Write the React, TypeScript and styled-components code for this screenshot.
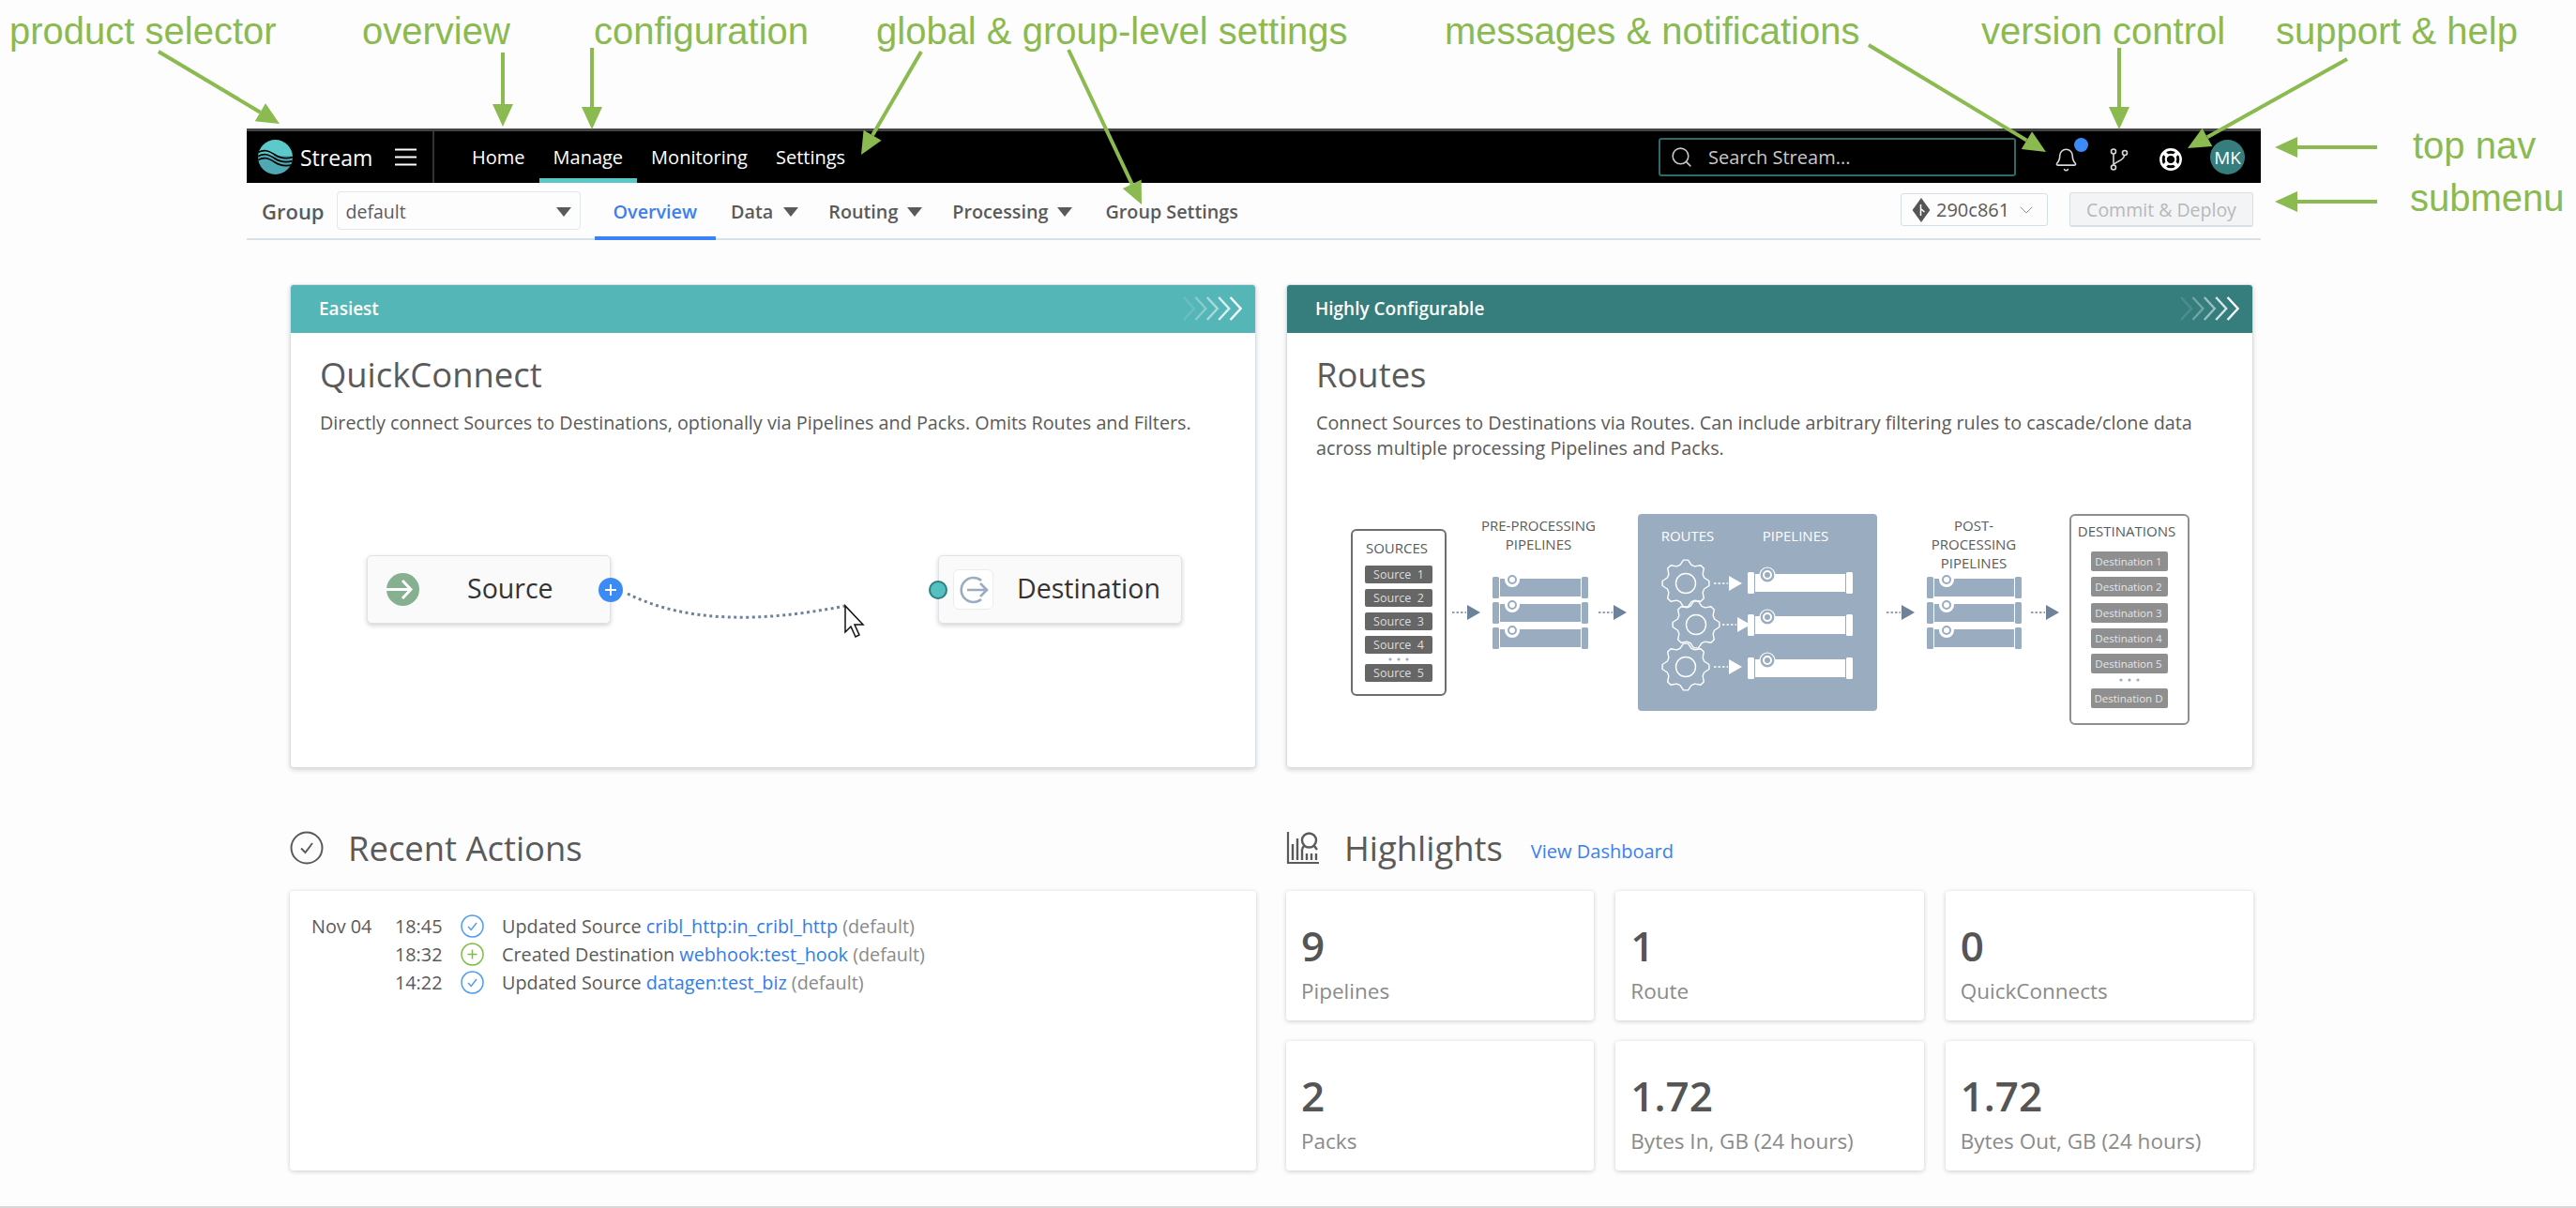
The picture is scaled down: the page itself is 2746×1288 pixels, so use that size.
import React from "react";
import styled, { createGlobalStyle } from "styled-components";
import { Bell, ChevronDown, Search } from "lucide-react";

const GlobalStyle = createGlobalStyle`
  html, body {
    margin: 0;
    padding: 0;
    background: #fdfdfd;
    overflow: hidden;
  }
  body {
    font-family: "Open Sans", "Liberation Sans", sans-serif;
    color: #5a5a5a;
  }
  * {
    box-sizing: border-box;
  }
`;

const GREEN = "#8aba50";
const TEXT = "#5a5a5a";
const SLATE = "#9aacbf";
const SLATE_DARK = "#6d829b";

/* ---------- page frame ---------- */

const Page = styled.div`
  position: relative;
  width: 2746px;
  height: 1288px;
  padding: 137px 336px 0 263px;
`;

/* ---------- callouts over the screenshot ---------- */

const CalloutLayer = styled.svg`
  position: absolute;
  left: 0;
  top: 0;
  width: 2746px;
  height: 1288px;
  pointer-events: none;
  z-index: 2;
`;

const Callout = styled.span<{ $x: number; $y: number }>`
  position: absolute;
  left: ${(p) => p.$x}px;
  top: ${(p) => p.$y}px;
  font-family: "Liberation Sans", Arial, sans-serif;
  font-size: 40px;
  line-height: 46px;
  color: ${GREEN};
  white-space: nowrap;
  z-index: 2;
`;

const callouts = [
  { text: "product selector", x: 10, y: 10 },
  { text: "overview", x: 386, y: 10 },
  { text: "configuration", x: 633, y: 10 },
  { text: "global & group-level settings", x: 934, y: 10 },
  { text: "messages & notifications", x: 1540, y: 10 },
  { text: "version control", x: 2112, y: 10 },
  { text: "support & help", x: 2426, y: 10 },
  { text: "top nav", x: 2572, y: 132 },
  { text: "submenu", x: 2569, y: 188 },
];

const calloutArrows = [
  [169, 55, 298, 132],
  [536, 56, 536, 135],
  [631, 51, 631, 138],
  [982, 55, 918, 165],
  [1139, 53, 1217, 218],
  [1992, 48, 2181, 162],
  [2259, 51, 2259, 138],
  [2502, 63, 2332, 158],
  [2534, 157, 2425, 157],
  [2534, 215, 2425, 215],
];

const CalloutArrow = ({ line }: { line: number[] }) => {
  const [x1, y1, x2, y2] = line;
  const len = Math.hypot(x2 - x1, y2 - y1);
  const ux = (x2 - x1) / len;
  const uy = (y2 - y1) / len;
  const bx = x2 - ux * 24;
  const by = y2 - uy * 24;
  const head = `${x2},${y2} ${bx - uy * 11},${by + ux * 11} ${bx + uy * 11},${by - ux * 11}`;
  return (
    <g>
      <line x1={x1} y1={y1} x2={bx} y2={by} stroke={GREEN} strokeWidth={4} />
      <polygon points={head} fill={GREEN} />
    </g>
  );
};

/* ---------- top nav ---------- */

const TopNav = styled.header`
  display: flex;
  align-items: stretch;
  height: 58px;
  background: #000;
  border-top: 3px solid #444;
  padding-right: 17px;
`;

const Brand = styled.div`
  display: flex;
  align-items: center;
  width: 200px;
  padding-left: 12px;
  border-right: 2px solid #333;
  color: #fff;
  font-size: 23px;
`;

const BrandName = styled.span`
  margin-left: 8px;
  margin-right: 24px;
`;

const NavLinks = styled.nav`
  display: flex;
  margin-left: 25px;
`;

const NavLink = styled.a<{ $active?: boolean }>`
  display: flex;
  align-items: center;
  padding: 5px 15px 0;
  font-size: 20px;
  color: #fff;
  border-bottom: 5px solid ${(p) => (p.$active ? "#5ac8c8" : "transparent")};
`;

const SearchBox = styled.div`
  display: flex;
  align-items: center;
  align-self: center;
  gap: 16px;
  width: 381px;
  height: 41px;
  margin-left: auto;
  padding-left: 10px;
  border: 2px solid #2a6b6b;
  border-radius: 3px;
  color: #c8c8c8;
  font-size: 20px;
`;

const NavIcons = styled.div`
  display: flex;
  align-items: center;
  margin-left: 40px;
`;

const IconSlot = styled.div<{ $gap: number }>`
  position: relative;
  display: flex;
  margin-right: ${(p) => p.$gap}px;
  margin-top: 5px;
`;

const NotifyDot = styled.span`
  position: absolute;
  right: -10px;
  top: -10px;
  width: 15px;
  height: 15px;
  border-radius: 50%;
  background: #3b8bf6;
`;

const Avatar = styled.div`
  display: flex;
  align-items: center;
  justify-content: center;
  width: 37px;
  height: 37px;
  border-radius: 50%;
  background: #367e7e;
  color: #fff;
  font-size: 19px;
`;

/* ---------- submenu ---------- */

const SubMenu = styled.div`
  display: flex;
  align-items: stretch;
  height: 61px;
  padding: 0 8px 0 16px;
  border-bottom: 2px solid #d8e0e8;
`;

const GroupLabel = styled.span`
  align-self: center;
  font-size: 22px;
  font-weight: 600;
  color: ${TEXT};
`;

const GroupSelect = styled.div`
  display: flex;
  align-items: center;
  justify-content: space-between;
  align-self: center;
  width: 260px;
  height: 41px;
  margin: 0 15px 0 13px;
  padding: 2px 9px 0;
  border: 1px solid #e2e7ec;
  border-radius: 4px;
  font-size: 19.5px;
  color: ${TEXT};
`;

const Caret = styled.span<{ $left?: number }>`
  display: inline-block;
  width: 0;
  height: 0;
  margin-left: ${(p) => p.$left ?? 0}px;
  border-left: 8px solid transparent;
  border-right: 8px solid transparent;
  border-top: 10px solid ${TEXT};
`;

const Tab = styled.a<{ $active?: boolean; $pad?: number; $lead?: number }>`
  display: flex;
  align-items: center;
  padding: 4px ${(p) => p.$pad ?? 16}px 0;
  margin-left: ${(p) => p.$lead ?? 0}px;
  margin-bottom: -2px;
  font-size: 19.75px;
  font-weight: 600;
  color: ${(p) => (p.$active ? "#3b7ff0" : TEXT)};
  border-bottom: 4px solid ${(p) => (p.$active ? "#3b82f6" : "transparent")};
`;

const VersionButton = styled.div`
  display: flex;
  align-items: center;
  align-self: center;
  gap: 6px;
  width: 157px;
  height: 35px;
  margin-left: auto;
  margin-top: -2px;
  padding-left: 11px;
  border: 1px solid #d5dee6;
  border-radius: 3px;
  font-size: 20px;
  color: ${TEXT};
`;

const DeployButton = styled.div`
  display: flex;
  align-items: center;
  justify-content: center;
  align-self: center;
  width: 196px;
  height: 37px;
  margin-left: 23px;
  margin-top: -2px;
  background: #f3f4f5;
  border: 1px solid #d8dfe5;
  border-bottom-width: 2px;
  border-radius: 3px;
  font-size: 19.5px;
  font-weight: 500;
  color: #b8b8b8;
`;

/* ---------- content ---------- */

const Content = styled.main`
  padding: 47px 8px 0 46px;
`;

const TwoColumns = styled.div`
  display: grid;
  grid-template-columns: 1030px 1031px;
  column-gap: 32px;
`;

const Card = styled.section`
  height: 516px;
  border: 1px solid #d5dee6;
  border-radius: 4px;
  background: #fff;
  box-shadow: 0 2px 5px rgba(0, 0, 0, 0.16);
  overflow: hidden;
`;

const CardBanner = styled.div<{ $bg: string }>`
  display: flex;
  align-items: center;
  justify-content: space-between;
  height: 52px;
  padding: 0 13px 0 31px;
  margin: -1px -1px 0;
  background: ${(p) => p.$bg};
  color: #fff;
  font-size: 19px;
  font-weight: 600;
`;

const CardBody = styled.div`
  padding: 19px 30px 0 31px;
`;

const CardTitle = styled.h2`
  margin: 0;
  font-size: 36.4px;
  font-weight: 400;
  line-height: 50px;
  color: ${TEXT};
`;

const CardText = styled.p`
  margin: 13px 0 0;
  font-size: 19.75px;
  line-height: 27px;
  color: ${TEXT};
`;

const ConnectCanvas = styled.div`
  position: relative;
  display: flex;
  gap: 349px;
  margin: 128px 0 0 50px;
`;

const FlowNode = styled.div`
  display: flex;
  align-items: center;
  width: 260px;
  height: 73px;
  background: #fafafa;
  border: 1px solid #dfe3e7;
  border-radius: 5px;
  box-shadow: 0 2px 5px rgba(0, 0, 0, 0.18);
  font-size: 28.5px;
  color: #333;
`;

const SourceGlyph = styled.span`
  display: flex;
  margin-left: 20px;
`;

const SourceLabel = styled.span`
  margin-left: 51px;
  margin-top: -3px;
`;

const DestinationLabel = styled.span`
  margin-left: 25px;
  margin-top: -3px;
`;

const DestinationIcon = styled.div`
  display: flex;
  align-items: center;
  justify-content: center;
  width: 43px;
  height: 43px;
  margin-left: 15px;
  background: #fff;
  border: 1px solid #ececec;
  border-radius: 6px;
`;

const PlusBadge = styled.span`
  position: absolute;
  left: 247px;
  top: 24px;
  display: flex;
  align-items: center;
  justify-content: center;
  width: 26px;
  height: 26px;
  border-radius: 50%;
  background: #3b8bf6;
`;

const PortDot = styled.span`
  position: absolute;
  left: 599px;
  top: 27px;
  width: 20px;
  height: 20px;
  border-radius: 50%;
  background: #55c0c0;
  border: 2px solid #2a7f7f;
`;

const WireLayer = styled.svg`
  position: absolute;
  left: 0;
  top: 0;
  width: 870px;
  height: 120px;
  overflow: visible;
`;

const RoutesDiagram = styled.svg`
  display: block;
  width: 920px;
  height: 240px;
  margin: 49px 0 0 28px;
  font-family: "Open Sans", "Liberation Sans", sans-serif;
`;

/* ---------- lower sections ---------- */

const SectionHead = styled.div`
  display: flex;
  align-items: center;
  height: 44px;
  margin: 63px 0 24px;
`;

const SectionTitle = styled.h3`
  margin: 0 0 0 26px;
  font-size: 36.4px;
  font-weight: 400;
  color: ${TEXT};
`;

const DashLink = styled.a`
  margin: 6px 0 0 30px;
  font-size: 20px;
  font-weight: 500;
  color: #3b7ff0;
`;

const Panel = styled.div`
  height: 298px;
  padding: 22px 23px;
  background: #fff;
  border-radius: 4px;
  box-shadow: 0 1px 5px rgba(0, 0, 0, 0.2);
`;

const ActionRow = styled.div`
  display: grid;
  grid-template-columns: 89px 70px 44px 1fr;
  align-items: center;
  height: 30px;
  font-size: 19.8px;
  color: ${TEXT};
`;

const ActionLink = styled.a`
  color: #2f7ee8;
`;

const ActionScope = styled.span`
  color: #8a8a8a;
`;

const HighlightGrid = styled.div`
  display: grid;
  grid-template-columns: repeat(3, 1fr);
  grid-auto-rows: 138px;
  gap: 22px 23px;
`;

const Tile = styled.div`
  padding: 29px 16px 0;
  background: #fff;
  border-radius: 4px;
  box-shadow: 0 1px 5px rgba(0, 0, 0, 0.2);
`;

const TileValue = styled.div`
  font-size: 44px;
  font-weight: 600;
  line-height: 58px;
  color: #555;
`;

const TileLabel = styled.div`
  margin-top: 6px;
  font-size: 22.5px;
  line-height: 28px;
  color: #8a8a8a;
`;

const BottomRule = styled.div`
  position: absolute;
  left: 0;
  right: 0;
  top: 1286px;
  height: 2px;
  background: #d8d8d8;
`;

/* ---------- icons ---------- */

const StreamLogo = () => (
  <svg width="37" height="37" viewBox="0 0 37 37">
    <defs>
      <clipPath id="logoClip">
        <circle cx="18.5" cy="18.5" r="18.5" />
      </clipPath>
    </defs>
    <g clipPath="url(#logoClip)">
      <rect width="37" height="18" fill="#5ccaca" />
      <rect y="17" width="37" height="20" fill="#4fa9b4" />
      <path d="M-2 15C6 9 12 12 18 16s12 5 21 2" fill="none" stroke="#000" strokeWidth="1.6" />
      <path d="M-2 19C6 13 12 16 18 20s12 5 21 2" fill="none" stroke="#000" strokeWidth="1.6" />
      <path d="M-2 23C6 17 12 20 18 24s12 5 21 2" fill="none" stroke="#000" strokeWidth="1.6" />
    </g>
  </svg>
);

const MenuIcon = () => (
  <svg width="23" height="19" viewBox="0 0 23 19" fill="none" stroke="#fff" strokeWidth="2">
    <line x1="0" y1="1.5" x2="23" y2="1.5" />
    <line x1="0" y1="9.5" x2="23" y2="9.5" />
    <line x1="0" y1="17.5" x2="23" y2="17.5" />
  </svg>
);

const BranchIcon = () => (
  <svg width="20" height="24" viewBox="0 0 20 24" fill="none" stroke="#d8d8d8" strokeWidth="1.6">
    <circle cx="4" cy="3.5" r="2.5" />
    <circle cx="16" cy="5" r="2.5" />
    <circle cx="4" cy="20.5" r="2.5" />
    <path d="M4 6v12M5 17c1-3 10-3 10.5-9.5" />
  </svg>
);

const HelpIcon = () => (
  <svg width="24" height="24" viewBox="0 0 24 24" fill="none" stroke="#fff">
    <circle cx="12" cy="12" r="10.6" strokeWidth="2.6" />
    <circle cx="12" cy="12" r="5.2" strokeWidth="2.2" />
    <path d="M5 5l4 4M19 5l-4 4M5 19l4-4M19 19l-4-4" strokeWidth="4" />
  </svg>
);

const CommitIcon = () => (
  <svg width="20" height="28" viewBox="0 0 20 28">
    <path d="M10 1l9.4 13L10 27 .6 14z" fill="#555" />
    <path d="M9.5 8v12M10 13l3.5 3" stroke="#fff" strokeWidth="1.5" fill="none" />
  </svg>
);

const BannerChevrons = () => (
  <svg width="66" height="26" viewBox="0 0 66 26" fill="none" stroke="#fff" strokeWidth="2.4">
    {[0.12, 0.3, 0.5, 0.8, 1].map((o, i) => (
      <polyline key={i} points={`${2 + i * 12.4},1 ${13 + i * 12.4},13 ${2 + i * 12.4},25`} opacity={o} />
    ))}
  </svg>
);

const SourceIcon = () => (
  <svg width="35" height="35" viewBox="0 0 35 35" fill="none" stroke="#fff" strokeWidth="3">
    <circle cx="17.5" cy="17.5" r="17.5" fill="#86b08f" stroke="none" />
    <path d="M0 17.5h25M17 8l9 9.5-9 9.5" />
  </svg>
);

const ExitIcon = () => (
  <svg width="32" height="32" viewBox="0 0 32 32" fill="none" stroke={SLATE} strokeWidth="2.6">
    <path d="M24 6A13 13 0 1 0 24 26" />
    <path d="M9 16h21M23 9l7 7-7 7" />
  </svg>
);

const ActionIcon = ({ kind }: { kind: "check" | "plus" }) => {
  const color = kind === "check" ? "#4f9df0" : "#7fbf3f";
  return (
    <svg width="25" height="25" viewBox="0 0 25 25" fill="none" stroke={color} strokeWidth="1.5">
      <circle cx="12.5" cy="12.5" r="11.5" />
      {kind === "check" ? <path d="M8 13l3.2 3.4L17 9" /> : <path d="M12.5 7.5v10M7.5 12.5h10" />}
    </svg>
  );
};

const CircleCheckIcon = () => (
  <svg width="36" height="36" viewBox="0 0 36 36" fill="none" stroke={TEXT} strokeWidth="2">
    <circle cx="18" cy="18" r="16.5" />
    <path d="M12 18.5l4.5 4.5L24 13" />
  </svg>
);

const HighlightsIcon = () => (
  <svg width="36" height="36" viewBox="0 0 36 36" fill="none" stroke={TEXT}>
    <path d="M2 1v33h33" strokeWidth="2.2" />
    <path d="M7 31V14M12 31V8M17 31V19M22 31V24M27 31V24M32 31V24" strokeWidth="2.4" />
    <circle cx="24.5" cy="10" r="7.5" strokeWidth="2.4" fill="#fff" />
    <path d="M19 16l-2 3M30 16l3 4" strokeWidth="2.4" />
  </svg>
);

/* ---------- routes diagram parts ---------- */

const gearPath = (cx: number, cy: number, outer: number, inner: number, teeth: number) => {
  const steps = teeth * 4;
  const pts: string[] = [];
  for (let i = 0; i < steps; i++) {
    const a = (i / steps) * Math.PI * 2 - Math.PI / 2 - Math.PI / steps;
    const r = i % 4 < 2 ? outer : inner;
    pts.push(`${(cx + r * Math.cos(a)).toFixed(1)},${(cy + r * Math.sin(a)).toFixed(1)}`);
  }
  return `M${pts.join("L")}Z`;
};

const Gear = ({ x, y }: { x: number; y: number }) => (
  <g fill="none" stroke="#fff" strokeWidth="1.4" strokeLinejoin="round">
    <path d={gearPath(x, y, 25, 20.5, 8)} />
    <circle cx={x} cy={y} r="10.5" />
  </g>
);

const DiagramArrow = ({ x, y, color }: { x: number; y: number; color: string }) => (
  <g>
    <line x1={x} y1={y} x2={x + 15} y2={y} stroke={color} strokeWidth="1.6" strokeDasharray="2.5 2" />
    <polygon points={`${x + 16},${y - 8} ${x + 30},${y} ${x + 16},${y + 8}`} fill={color} />
  </g>
);

const Pipe = ({ x, y, width, inverse }: { x: number; y: number; width: number; inverse?: boolean }) => {
  const main = inverse ? "#fff" : SLATE;
  const knob = inverse ? SLATE : "#fff";
  return (
    <g>
      <rect x={x} y={y} width={7} height={23} rx={1.5} fill={main} />
      <rect x={x + 8} y={y + 2} width={width - 16} height={19} fill={main} />
      <rect x={x + width - 7} y={y} width={7} height={23} rx={1.5} fill={main} />
      <circle cx={x + 21} cy={y + 3} r={8} fill={inverse ? SLATE : "#fff"} stroke={inverse ? "#fff" : "none"} strokeWidth="1.2" />
      <circle cx={x + 21} cy={y + 3} r={4} fill="none" stroke={inverse ? "#fff" : SLATE} strokeWidth="2" />
      <circle cx={x + 21} cy={y + 3} r={1.5} fill={knob} />
    </g>
  );
};

const DiagramLabel = ({ x, y, children, fill = TEXT, size = 15 }: { x: number; y: number; children: string; fill?: string; size?: number }) => (
  <text x={x} y={y} fontSize={size} textAnchor="middle" fill={fill}>
    {children}
  </text>
);

const Dots = ({ x, y, fill }: { x: number; y: number; fill: string }) => (
  <g fill={fill}>
    <circle cx={x - 9} cy={y} r="1.6" />
    <circle cx={x} cy={y} r="1.6" />
    <circle cx={x + 9} cy={y} r="1.6" />
  </g>
);

const sourceChips = [
  { label: "Source  1", y: 603 },
  { label: "Source  2", y: 628 },
  { label: "Source  3", y: 653 },
  { label: "Source  4", y: 678 },
  { label: "Source  5", y: 708 },
];

const destinationChips = [
  { label: "Destination 1", y: 588 },
  { label: "Destination 2", y: 615 },
  { label: "Destination 3", y: 643 },
  { label: "Destination 4", y: 670 },
  { label: "Destination 5", y: 697 },
  { label: "Destination D", y: 734 },
];

const Diagram = () => (
  <RoutesDiagram viewBox="1430 540 920 240">
    <rect x="1440" y="565" width="100" height="176" rx="5" fill="#fff" stroke="#6e6e6e" strokeWidth="2" />
    <DiagramLabel x={1488} y={590}>SOURCES</DiagramLabel>
    {sourceChips.map((c) => (
      <g key={c.y}>
        <rect x="1454" y={c.y} width="72" height="19" rx="2" fill="#666" />
        <text x="1490" y={c.y + 14} fontSize="12.5" textAnchor="middle" fill="#ddd" xmlSpace="preserve">
          {c.label}
        </text>
      </g>
    ))}
    <Dots x={1490} y={703} fill={SLATE} />

    <DiagramArrow x={1547} y={653} color={SLATE_DARK} />
    <DiagramLabel x={1639} y={566}>PRE-PROCESSING</DiagramLabel>
    <DiagramLabel x={1639} y={586}>PIPELINES</DiagramLabel>
    <Pipe x={1590} y={615} width={102} />
    <Pipe x={1590} y={642} width={102} />
    <Pipe x={1590} y={669} width={102} />
    <DiagramArrow x={1703} y={653} color={SLATE_DARK} />

    <rect x="1745" y="548" width="255" height="210" rx="4" fill={SLATE} />
    <DiagramLabel x={1798} y={577} fill="#fff">ROUTES</DiagramLabel>
    <DiagramLabel x={1913} y={577} fill="#fff">PIPELINES</DiagramLabel>
    <Gear x={1796} y={622} />
    <Gear x={1807} y={666} />
    <Gear x={1796} y={711} />
    <DiagramArrow x={1826} y={622} color="#fff" />
    <DiagramArrow x={1835} y={666} color="#fff" />
    <DiagramArrow x={1826} y={711} color="#fff" />
    <Pipe x={1862} y={610} width={112} inverse />
    <Pipe x={1862} y={655} width={112} inverse />
    <Pipe x={1862} y={701} width={112} inverse />

    <DiagramArrow x={2010} y={653} color={SLATE_DARK} />
    <DiagramLabel x={2103} y={566}>POST-</DiagramLabel>
    <DiagramLabel x={2103} y={586}>PROCESSING</DiagramLabel>
    <DiagramLabel x={2103} y={606}>PIPELINES</DiagramLabel>
    <Pipe x={2053} y={615} width={101} />
    <Pipe x={2053} y={642} width={101} />
    <Pipe x={2053} y={669} width={101} />
    <DiagramArrow x={2164} y={653} color={SLATE_DARK} />

    <rect x="2206" y="549" width="126" height="223" rx="5" fill="#fff" stroke="#8f8f8f" strokeWidth="2" />
    <DiagramLabel x={2266} y={572}>DESTINATIONS</DiagramLabel>
    {destinationChips.map((c) => (
      <g key={c.y}>
        <rect x="2228" y={c.y} width="82" height="21" rx="2" fill="#8f8f8f" />
        <text x="2268" y={c.y + 15} fontSize="11.5" textAnchor="middle" fill="#e6e6e6">
          {c.label}
        </text>
      </g>
    ))}
    <Dots x={2269} y={725} fill={SLATE} />
  </RoutesDiagram>
);

/* ---------- data ---------- */

const actions = [
  { date: "Nov 04", time: "18:45", kind: "check" as const, verb: "Updated Source", link: "cribl_http:in_cribl_http" },
  { date: "", time: "18:32", kind: "plus" as const, verb: "Created Destination", link: "webhook:test_hook" },
  { date: "", time: "14:22", kind: "check" as const, verb: "Updated Source", link: "datagen:test_biz" },
];

const highlights = [
  { value: "9", label: "Pipelines" },
  { value: "1", label: "Route" },
  { value: "0", label: "QuickConnects" },
  { value: "2", label: "Packs" },
  { value: "1.72", label: "Bytes In, GB (24 hours)" },
  { value: "1.72", label: "Bytes Out, GB (24 hours)" },
];

export default function App() {
  return (
    <Page>
      <GlobalStyle />

      <TopNav>
        <Brand>
          <StreamLogo />
          <BrandName>Stream</BrandName>
          <MenuIcon />
        </Brand>
        <NavLinks>
          <NavLink>Home</NavLink>
          <NavLink $active>Manage</NavLink>
          <NavLink>Monitoring</NavLink>
          <NavLink>Settings</NavLink>
        </NavLinks>
        <SearchBox>
          <Search size={25} strokeWidth={1.5} color="#c8c8c8" />
          Search Stream...
        </SearchBox>
        <NavIcons>
          <IconSlot $gap={33}>
            <Bell size={27} strokeWidth={1.4} color="#d8d8d8" />
            <NotifyDot />
          </IconSlot>
          <IconSlot $gap={33}>
            <BranchIcon />
          </IconSlot>
          <IconSlot $gap={30}>
            <HelpIcon />
          </IconSlot>
          <Avatar>MK</Avatar>
        </NavIcons>
      </TopNav>

      <SubMenu>
        <GroupLabel>Group</GroupLabel>
        <GroupSelect>
          default
          <Caret />
        </GroupSelect>
        <Tab $active $pad={20}>Overview</Tab>
        <Tab>
          Data
          <Caret $left={11} />
        </Tab>
        <Tab>
          Routing
          <Caret $left={10} />
        </Tab>
        <Tab>
          Processing
          <Caret $left={10} />
        </Tab>
        <Tab $lead={3}>Group Settings</Tab>
        <VersionButton>
          <CommitIcon />
          290c861
          <ChevronDown size={24} strokeWidth={0.9} color="#888" />
        </VersionButton>
        <DeployButton>Commit &amp; Deploy</DeployButton>
      </SubMenu>

      <Content>
        <TwoColumns>
          <Card>
            <CardBanner $bg="#55b6b8">
              Easiest
              <BannerChevrons />
            </CardBanner>
            <CardBody>
              <CardTitle>QuickConnect</CardTitle>
              <CardText>Directly connect Sources to Destinations, optionally via Pipelines and Packs. Omits Routes and Filters.</CardText>
              <ConnectCanvas>
                <FlowNode>
                  <SourceGlyph>
                    <SourceIcon />
                  </SourceGlyph>
                  <SourceLabel>Source</SourceLabel>
                </FlowNode>
                <FlowNode>
                  <DestinationIcon>
                    <ExitIcon />
                  </DestinationIcon>
                  <DestinationLabel>Destination</DestinationLabel>
                </FlowNode>
                <WireLayer viewBox="0 0 870 120">
                  <path d="M278 41C340 72 420 72 510 54" fill="none" stroke={SLATE_DARK} strokeWidth="3" strokeDasharray="3 3.5" />
                  <path d="M510 54v28l6-6 5 11 4-2-5-11h9z" fill="#fff" stroke="#111" strokeWidth="1.5" />
                </WireLayer>
                <PlusBadge>
                  <svg width="14" height="14" viewBox="0 0 14 14" stroke="#fff" strokeWidth="2">
                    <path d="M7 1v12M1 7h12" />
                  </svg>
                </PlusBadge>
                <PortDot />
              </ConnectCanvas>
            </CardBody>
          </Card>

          <Card>
            <CardBanner $bg="#367e7e">
              Highly Configurable
              <BannerChevrons />
            </CardBanner>
            <CardBody>
              <CardTitle>Routes</CardTitle>
              <CardText>
                Connect Sources to Destinations via Routes. Can include arbitrary filtering rules to cascade/clone data across multiple processing Pipelines and Packs.
              </CardText>
              <Diagram />
            </CardBody>
          </Card>
        </TwoColumns>

        <TwoColumns>
          <div>
            <SectionHead>
              <CircleCheckIcon />
              <SectionTitle>Recent Actions</SectionTitle>
            </SectionHead>
            <Panel>
              {actions.map((a) => (
                <ActionRow key={a.time}>
                  <span>{a.date}</span>
                  <span>{a.time}</span>
                  <ActionIcon kind={a.kind} />
                  <span>
                    {a.verb} <ActionLink>{a.link}</ActionLink> <ActionScope>(default)</ActionScope>
                  </span>
                </ActionRow>
              ))}
            </Panel>
          </div>
          <div>
            <SectionHead>
              <HighlightsIcon />
              <SectionTitle>Highlights</SectionTitle>
              <DashLink>View Dashboard</DashLink>
            </SectionHead>
            <HighlightGrid>
              {highlights.map((h) => (
                <Tile key={h.label}>
                  <TileValue>{h.value}</TileValue>
                  <TileLabel>{h.label}</TileLabel>
                </Tile>
              ))}
            </HighlightGrid>
          </div>
        </TwoColumns>
      </Content>

      <BottomRule />

      {callouts.map((c) => (
        <Callout key={c.text} $x={c.x} $y={c.y}>
          {c.text}
        </Callout>
      ))}
      <CalloutLayer viewBox="0 0 2746 1288">
        {calloutArrows.map((line) => (
          <CalloutArrow key={line.join("-")} line={line} />
        ))}
      </CalloutLayer>
    </Page>
  );
}
